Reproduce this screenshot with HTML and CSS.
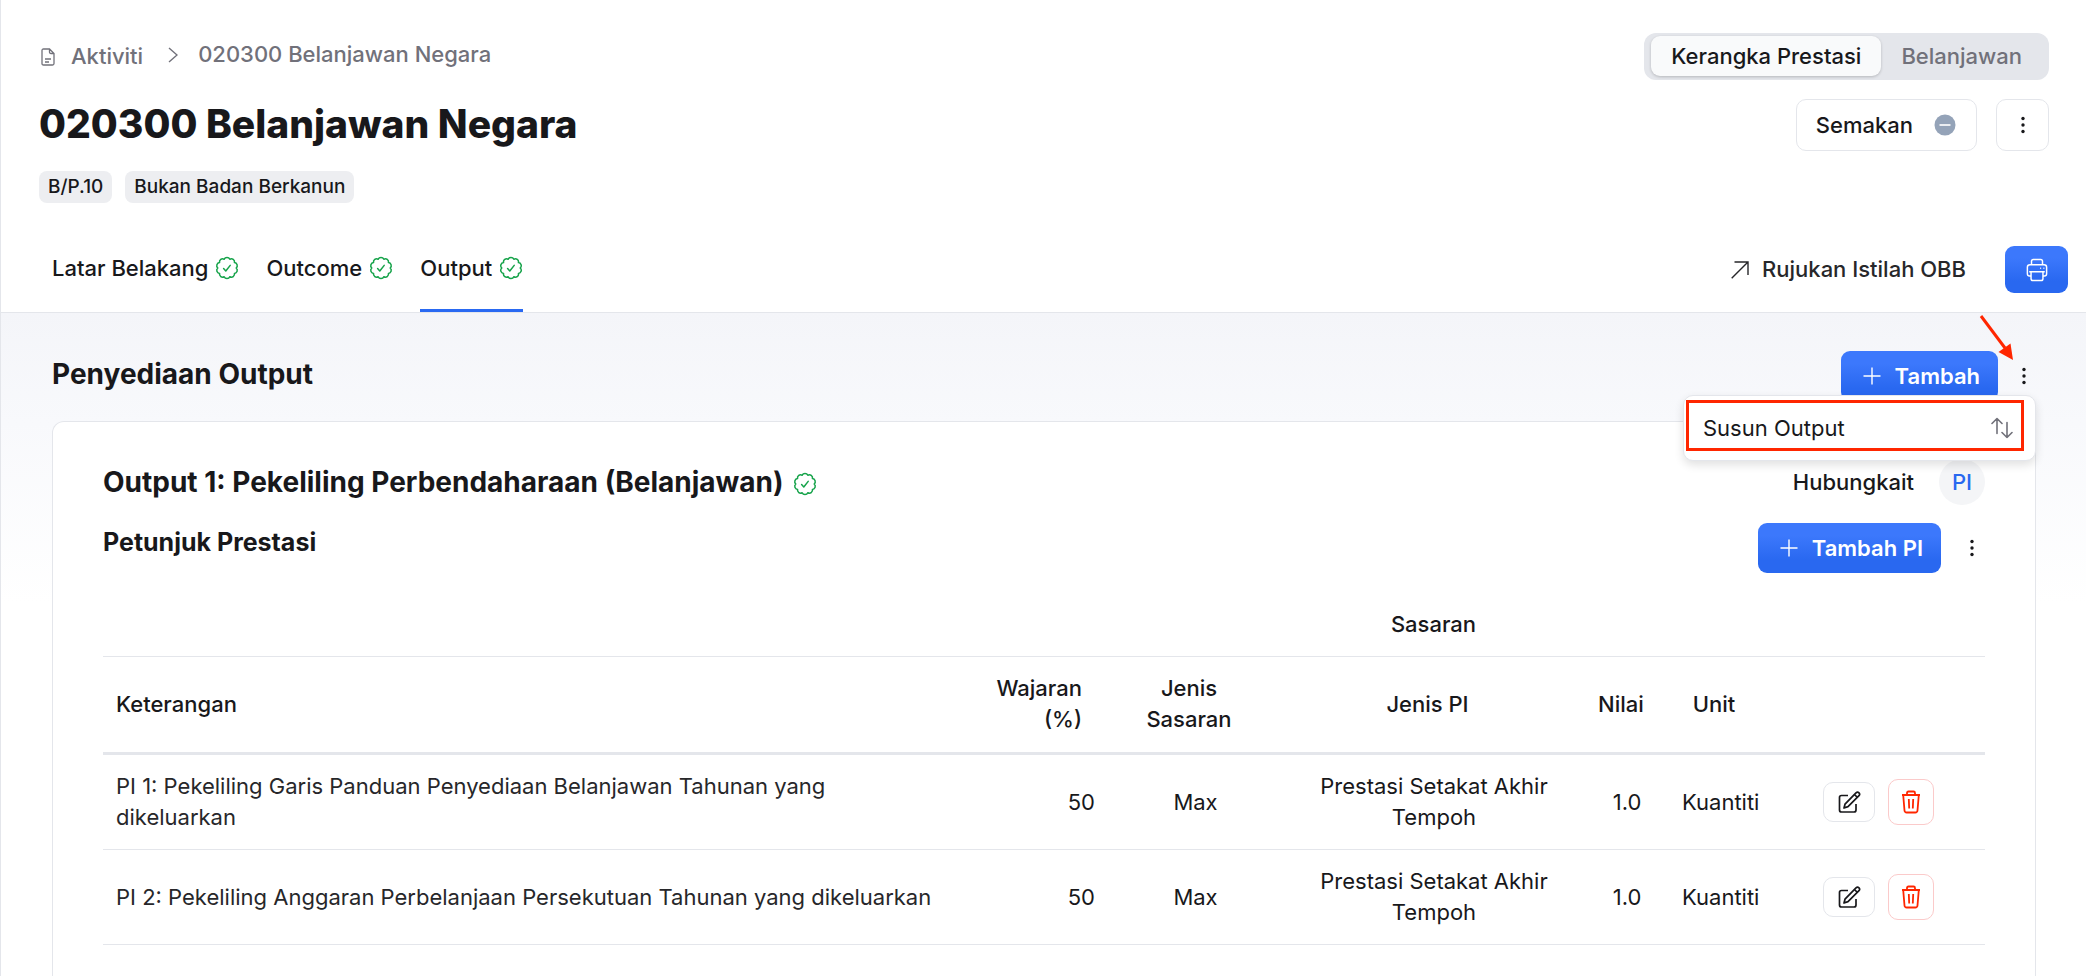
FILE: index.html
```html
<!DOCTYPE html>
<html lang="ms">
<head>
<meta charset="utf-8">
<meta name="viewport" content="width=device-width, initial-scale=1">
<title>020300 Belanjawan Negara</title>
<link rel="stylesheet" href="styles.css">
</head>
<body>
<svg class="sprite" aria-hidden="true">
  <symbol id="i-check" viewBox="0 0 24 24">
    <path d="M9.160 3.250A3.100 3.100 0 0 1 14.840 3.250A3.100 3.100 0 0 1 19.440 6.590A3.100 3.100 0 0 1 21.200 12A3.100 3.100 0 0 1 19.440 17.410A3.100 3.100 0 0 1 14.840 20.750A3.100 3.100 0 0 1 9.160 20.750A3.100 3.100 0 0 1 4.560 17.410A3.100 3.100 0 0 1 2.800 12A3.100 3.100 0 0 1 4.560 6.590A3.100 3.100 0 0 1 9.160 3.250Z"/>
    <path d="M8.600 12.600l2.200 2.400 4.400-5.600"/>
  </symbol>
  <symbol id="i-doc" viewBox="0 0 14 18">
    <path d="M2.500 1H8.500L13 5.500V15.500Q13 17 11.500 17H2.500Q1 17 1 15.500V2.500Q1 1 2.500 1ZM8.500 1V4Q8.500 5.500 10 5.500H13M4 11H10M4 14H8"/>
  </symbol>
  <symbol id="i-dots" viewBox="0 0 6 18">
    <circle cx="3" cy="2.500" r="1.700"/><circle cx="3" cy="9" r="1.700"/><circle cx="3" cy="15.500" r="1.700"/>
  </symbol>
  <symbol id="i-plus" viewBox="0 0 18 18"><path d="M9 .5V17.500M.5 9H17.500"/></symbol>
  <symbol id="i-edit" viewBox="0 0 24 24">
    <path d="M11 5.500H4.500Q2.500 5.500 2.500 7.500V20Q2.500 22 4.500 22H17Q19 22 19 20V14M7 18L8 14.200L19 2.800Q20.500 1.500 22 2.800Q23.300 4.200 22 5.700L11 16.600ZM17.400 4.500L20.400 7.400"/>
  </symbol>
  <symbol id="i-trash" viewBox="0 0 20 24">
    <path d="M1 5H19M2.200 5L3.500 20.500Q3.700 22.500 5.700 22.500H14.300Q16.300 22.500 16.500 20.500L17.800 5M6 5V3Q6 1.500 7.500 1.500H12.500Q14 1.500 14 3V5M7.800 9L8.200 18.500M12.200 9L11.800 18.500"/>
  </symbol>
</svg>

<header class="header">
  <div class="header-main">
    <div class="intro">
      <nav class="crumbs" aria-label="Breadcrumb">
        <a class="crumb-link" href="#"><svg class="doc"><use href="#i-doc"/></svg>Aktiviti</a>
        <svg class="chevron" viewBox="0 0 10 16"><path d="M1 1L9 8L1 15"/></svg>
        <a href="#" aria-current="page">020300 Belanjawan Negara</a>
      </nav>
      <h1>020300 Belanjawan Negara</h1>
      <div class="badges"><span class="badge">B/P.10</span><span class="badge">Bukan Badan Berkanun</span></div>
    </div>
    <div class="controls">
      <div class="switch">
        <button class="switch-item is-active" type="button" aria-pressed="true">Kerangka Prestasi</button>
        <button class="switch-item" type="button" aria-pressed="false">Belanjawan</button>
      </div>
      <div class="actions">
        <button class="outline review" type="button">Semakan
          <svg class="minus" viewBox="0 0 22 22"><circle cx="11" cy="11" r="10.500"/><path d="M5.500 11H16.500"/></svg>
        </button>
        <button class="outline more" type="button" aria-label="Tindakan lain"><svg class="dots"><use href="#i-dots"/></svg></button>
      </div>
    </div>
  </div>
  <div class="tabbar">
    <nav class="tabs">
      <a class="tab" href="#">Latar Belakang<svg class="check"><use href="#i-check"/></svg></a>
      <a class="tab" href="#">Outcome<svg class="check"><use href="#i-check"/></svg></a>
      <a class="tab is-active" href="#" aria-current="page">Output<svg class="check"><use href="#i-check"/></svg></a>
    </nav>
    <div class="tools">
      <a class="reference" href="#"><svg class="ne" viewBox="0 0 18 18"><path d="M.7 17.300L17 1M3.500 1H17V14"/></svg>Rujukan Istilah OBB</a>
      <button class="primary print" type="button" aria-label="Cetak">
        <svg class="printer" viewBox="0 0 24 26"><path d="M6 7V3.500Q6 1.500 8 1.500H16Q18 1.500 18 3.500V7M5 19.500H4Q1.500 19.500 1.500 17V10Q1.500 7.200 4.300 7.200H19.700Q22.500 7.200 22.500 10V17Q22.500 19.500 20 19.500H19M3.500 15H20.500M5.500 15V22.500Q5.500 24.500 7.500 24.500H16.500Q18.500 24.500 18.500 22.500V15M15.500 11H16.500M19 11H20"/></svg>
      </button>
    </div>
  </div>
</header>

<main class="content">
  <div class="section-head">
    <h2>Penyediaan Output</h2>
    <div class="section-tools">
      <button class="primary" type="button"><svg class="plus"><use href="#i-plus"/></svg>Tambah</button>
      <button class="kebab" type="button" aria-label="Menu output" aria-expanded="true"><svg class="dots"><use href="#i-dots"/></svg></button>
      <svg class="arrow" viewBox="0 0 36 48" aria-hidden="true"><path class="shaft" d="M2 2L26 34"/><path class="tip" d="M34 46L19.500 38L31.500 29.500Z"/></svg>
      <div class="menu" role="menu">
        <button class="menu-item" type="button" role="menuitem">Susun Output
          <svg class="sort" viewBox="0 0 22 22"><path d="M6 16.500V1.500M1 6.500L6 1.500L11 6.500M16 5.500V20.500M11 15.500L16 20.500L21 15.500"/></svg>
        </button>
      </div>
    </div>
  </div>

  <section class="card">
    <div class="card-row">
      <h2>Output 1: Pekeliling Perbendaharaan (Belanjawan)<svg class="check"><use href="#i-check"/></svg></h2>
      <div class="linked">Hubungkait<span class="chip">PI</span></div>
    </div>
    <div class="card-row sub-row">
      <h3>Petunjuk Prestasi</h3>
      <div class="pi-tools">
        <button class="primary" type="button"><svg class="plus"><use href="#i-plus"/></svg>Tambah PI</button>
        <button class="kebab" type="button" aria-label="Menu petunjuk"><svg class="dots"><use href="#i-dots"/></svg></button>
      </div>
    </div>
    <table class="grid">
      <colgroup>
        <col><col class="c-weight"><col class="c-target"><col class="c-type"><col class="c-value"><col class="c-unit"><col class="c-actions">
      </colgroup>
      <thead>
        <tr><th></th><th></th><th class="center" colspan="4">Sasaran</th><th></th></tr>
        <tr>
          <th>Keterangan</th><th class="right">Wajaran (%)</th><th class="center">Jenis Sasaran</th><th class="center">Jenis PI</th><th>Nilai</th><th class="center">Unit</th><th></th>
        </tr>
      </thead>
      <tbody>
        <tr>
          <td>PI 1: Pekeliling Garis Panduan Penyediaan Belanjawan Tahunan yang dikeluarkan</td>
          <td class="right">50</td><td class="center">Max</td><td class="center">Prestasi Setakat Akhir Tempoh</td><td class="center">1.0</td><td class="center">Kuantiti</td>
          <td><div class="row-actions">
            <button class="outline edit" type="button" aria-label="Sunting PI 1"><svg class="pen"><use href="#i-edit"/></svg></button>
            <button class="outline delete" type="button" aria-label="Padam PI 1"><svg class="bin"><use href="#i-trash"/></svg></button>
          </div></td>
        </tr>
        <tr>
          <td>PI 2: Pekeliling Anggaran Perbelanjaan Persekutuan Tahunan yang dikeluarkan</td>
          <td class="right">50</td><td class="center">Max</td><td class="center">Prestasi Setakat Akhir Tempoh</td><td class="center">1.0</td><td class="center">Kuantiti</td>
          <td><div class="row-actions">
            <button class="outline edit" type="button" aria-label="Sunting PI 2"><svg class="pen"><use href="#i-edit"/></svg></button>
            <button class="outline delete" type="button" aria-label="Padam PI 2"><svg class="bin"><use href="#i-trash"/></svg></button>
          </div></td>
        </tr>
      </tbody>
    </table>
  </section>
</main>
</body>
</html>
```
FILE: styles.css
```css
* { box-sizing: border-box; }

body {
  margin: 0;
  min-height: 100vh;
  display: flex;
  flex-direction: column;
  border-left: 1px solid #e4e6eb;
  background: #fff;
  color: #18181b;
  font: 500 22px/31px Inter, "Liberation Sans", sans-serif;
}

h1, h2, h3 { margin: 0; font-weight: 700; }
h1 { font-size: 39px; line-height: 48px; font-weight: 800; }
h2 { font-size: 28px; line-height: 36px; }
h3 { font-size: 25px; line-height: 32px; }

a { color: inherit; text-decoration: none; }

button {
  margin: 0;
  padding: 0;
  border: 0;
  background: none;
  color: inherit;
  font: inherit;
  cursor: pointer;
}

svg { display: block; flex: none; fill: none; stroke: currentColor; }

.sprite { position: absolute; width: 0; height: 0; }

/* Icons */
.check { width: 24px; height: 24px; color: #16a34a; stroke-width: 1.5; stroke-linejoin: round; stroke-linecap: round; }
.doc { width: 14px; height: 18px; stroke-width: 1.3; }
.chevron { width: 10px; height: 16px; stroke-width: 1.4; }
.dots { width: 6px; height: 18px; fill: currentColor; stroke: none; }
.plus { width: 18px; height: 18px; stroke-width: 1.4; }
.ne { width: 18px; height: 18px; stroke-width: 1.4; }
.printer { width: 22px; height: 24px; stroke-width: 1.6; }
.minus { width: 22px; height: 22px; }
.minus circle { fill: #94a3b8; stroke: none; }
.minus path { stroke: #fff; stroke-width: 1.6; }
.sort { width: 22px; height: 22px; color: #71717a; stroke-width: 1.6; stroke-linecap: round; stroke-linejoin: round; }
.pen { width: 24px; height: 24px; stroke-width: 1.7; stroke-linejoin: round; }
.bin { width: 20px; height: 24px; stroke-width: 1.8; }

/* Header */
.header { border-bottom: 1px solid #e4e6eb; }

.header-main {
  display: flex;
  justify-content: space-between;
  padding: 33px 37px 24px 38px;
}

.crumbs { display: flex; align-items: center; gap: 20px; margin-top: 4px; color: #71717a; }
.crumb-link { display: flex; align-items: center; gap: 16px; padding-top: 4px; padding-left: 2px; }
.chevron { margin-left: 5px; }
.intro h1 { margin-top: 28px; }

.badges { display: flex; gap: 13px; margin-top: 23px; }
.badge { padding: 0 9px; border-radius: 8px; background: #edeef1; font-size: 19px; line-height: 32px; }

.controls { display: flex; flex-direction: column; align-items: flex-end; gap: 19px; }
.switch { display: flex; padding: 3px 7px 4px; border-radius: 12px; background: #e4e6eb; }
.switch-item { height: 40px; padding: 0 20px; border-radius: 9px; color: #71717a; }
.switch-item.is-active { background: #f9fafb; color: #18181b; box-shadow: 0 1px 3px rgba(0, 0, 0, .2); }

.actions { display: flex; gap: 19px; }
.outline { display: flex; align-items: center; justify-content: center; border: 1px solid #e4e6eb; border-radius: 10px; background: #fff; }
.review { gap: 21px; height: 52px; padding: 0 20px 0 19px; }
.more { width: 53px; height: 52px; }

.tabbar { display: flex; justify-content: space-between; height: 85px; padding: 0 18px 0 51px; }
.tabs { display: flex; gap: 27px; }
.tab { display: flex; align-items: center; gap: 7px; border-bottom: 3px solid transparent; }
.tab.is-active { border-color: #2969f2; }
.tools { display: flex; align-items: center; gap: 39px; }
.reference { display: flex; align-items: center; gap: 13px; color: #27272a; }

.primary {
  display: flex;
  align-items: center;
  gap: 14px;
  height: 50px;
  padding: 0 18px 0 22px;
  border-radius: 9px;
  background: linear-gradient(#3c78fc 25%, #2968f0 75%);
  color: #fff;
  font-weight: 600;
}
.print { justify-content: center; width: 63px; height: 47px; padding: 0; }

/* Content */
.content {
  flex: 1;
  display: flex;
  flex-direction: column;
  padding: 38px 50px 0 51px;
  background: linear-gradient(#f4f5f9, #f8f9fc 110px, #fff 290px);
}

.section-head { display: flex; justify-content: space-between; height: 70px; }
.section-head h2 { margin-top: 5px; }
.section-tools { position: relative; display: flex; align-items: flex-start; }
.kebab { display: flex; align-items: center; justify-content: center; width: 24px; height: 50px; }
.section-tools .kebab { margin-left: 14px; }

.arrow { position: absolute; top: -37px; right: 21px; width: 36px; height: 48px; }
.shaft { stroke: #ff2600; stroke-width: 3; }
.tip { fill: #ff2600; stroke: none; }

.menu {
  position: absolute;
  top: 44px;
  right: 0;
  z-index: 2;
  width: 353px;
  padding: 4px 11px 9px 2px;
  border: 1px solid #e4e6eb;
  border-radius: 10px;
  background: #fff;
  box-shadow: 0 4px 10px rgba(0, 0, 0, .12);
}
.menu-item {
  display: flex;
  align-items: center;
  justify-content: space-between;
  width: 100%;
  height: 51px;
  padding: 5px 8px 0 14px;
  border: 3px solid #ff2600;
  font-weight: 400;
}

.card {
  flex: 1;
  padding: 37px 50px 30px;
  border: 1px solid #e4e6eb;
  border-bottom: 0;
  border-radius: 12px 12px 0 0;
  background: #fff;
}
.card-row { display: flex; justify-content: space-between; align-items: center; }
.card-row h2 { display: flex; align-items: center; gap: 9px; }
.card-row .check { margin-top: 4px; }
.linked { display: flex; align-items: center; gap: 25px; }
.chip { width: 46px; border-radius: 50%; background: #f4f5f7; color: #2968f0; line-height: 46px; text-align: center; }
.sub-row { align-items: flex-start; margin-top: 18px; }
.sub-row h3 { margin-top: 3px; }
.pi-tools { display: flex; gap: 19px; padding-right: 1px; }

/* Indicator table */
.grid { width: 100%; margin-top: 22px; table-layout: fixed; border-collapse: separate; border-spacing: 0; }
.c-weight { width: 148px; }
.c-target { width: 175px; }
.c-type { width: 302px; }
.c-value { width: 84px; }
.c-unit { width: 103px; }
.c-actions { width: 213px; }
.grid th, .grid td { padding: 16px 13px; border-bottom: 1px solid #e4e6eb; text-align: left; }
.grid th { padding-right: 26px; padding-bottom: 17px; font-weight: 500; }
.grid thead tr:first-child th { padding-top: 14px; padding-bottom: 16px; }
.grid thead tr + tr th { border-bottom-width: 3px; }
.grid td { font-weight: 400; }
.grid .right { text-align: right; }
.grid .center { text-align: center; }
.grid td:first-child { color: #27272a; }
.row-actions { display: flex; align-items: center; justify-content: center; gap: 13px; }
.edit { width: 52px; height: 40px; }
.delete { width: 46px; height: 46px; border-color: #fbcaca; color: #ff2600; }
```
